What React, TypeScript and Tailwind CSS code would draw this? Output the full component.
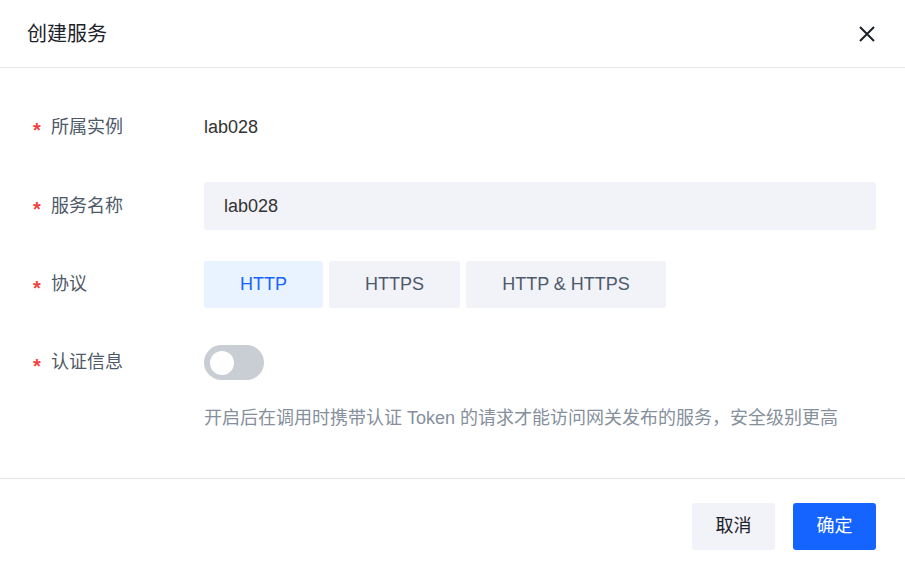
import { useState } from 'react'

const font = { fontFamily: '"Liberation Sans", "Noto Sans CJK SC", sans-serif' }

function Label({ text }: { text: string }) {
  return (
    <div className="w-[171px] shrink-0 flex items-center text-[18px] text-[#4e5969]">
      <span className="text-[#f53f3f] w-[18px] text-[20px] font-bold leading-none pt-[6px]">*</span>
      <span>{text}</span>
    </div>
  )
}

export default function App() {
  const [protocol, setProtocol] = useState('HTTP')
  const [auth, setAuth] = useState(false)
  const protocols = [
    { key: 'HTTP', w: 'w-[119px]' },
    { key: 'HTTPS', w: 'w-[131px]' },
    { key: 'HTTP & HTTPS', w: 'w-[200px]' },
  ]

  return (
    <div className="w-[905px] h-[574px] bg-white flex flex-col" style={font}>
      {/* Header */}
      <div className="h-[68px] shrink-0 flex items-center justify-between pl-[27px] pr-[30px] border-b border-[#e5e6eb]">
        <h1 className="text-[20px] text-[#1d2129]">创建服务</h1>
        <button className="w-[16px] h-[16px] text-[#1d2129]">
          <svg viewBox="0 0 16 16" width="16" height="16" fill="none" stroke="currentColor" strokeWidth="2">
            <path d="M1 1L15 15M15 1L1 15" />
          </svg>
        </button>
      </div>

      {/* Body */}
      <div className="flex-1 flex flex-col pl-[33px] pr-[29px] pt-[47px]">
        <div className="flex items-center h-[24px]">
          <Label text="所属实例" />
          <span className="text-[18px] text-[#333]">lab028</span>
        </div>

        <div className="flex items-center mt-[43px] h-[48px]">
          <Label text="服务名称" />
          <input
            defaultValue="lab028"
            className="flex-1 h-[48px] rounded-[3px] bg-[#f2f3f8] px-[20px] text-[18px] text-[#333] outline-none"
          />
        </div>

        <div className="flex items-center mt-[31px] h-[47px]">
          <Label text="协议" />
          <div className="flex gap-[6px]">
            {protocols.map(p => (
              <button
                key={p.key}
                onClick={() => setProtocol(p.key)}
                className={`${p.w} h-[47px] rounded-[3px] text-[18px] ${
                  protocol === p.key ? 'bg-[#e8f3ff] text-[#1664ff]' : 'bg-[#f2f3f8] text-[#4e5969]'
                }`}
              >
                {p.key}
              </button>
            ))}
          </div>
        </div>

        <div className="flex items-center mt-[37px] h-[35px]">
          <Label text="认证信息" />
          <button
            onClick={() => setAuth(!auth)}
            className={`relative w-[60px] h-[35px] rounded-full ${auth ? 'bg-[#1664ff]' : 'bg-[#c9cdd4]'}`}
          >
            <span
              className={`absolute top-[5.5px] w-[24px] h-[24px] rounded-full bg-white ${auth ? 'left-[30px]' : 'left-[6px]'}`}
            />
          </button>
        </div>

        <p className="ml-[171px] mt-[26px] text-[18px] leading-[24px] text-[#86909c]">
          开启后在调用时携带认证 Token 的请求才能访问网关发布的服务，安全级别更高
        </p>
      </div>

      {/* Footer */}
      <div className="h-[96px] shrink-0 border-t border-[#e5e6eb] flex items-start justify-end gap-[18px] pr-[29px] pt-[24px]">
        <button className="w-[83px] h-[47px] rounded-[3px] bg-[#f2f3f8] text-[18px] text-[#1d2129]">取消</button>
        <button className="w-[83px] h-[47px] rounded-[3px] bg-[#1664ff] text-[18px] text-white">确定</button>
      </div>
    </div>
  )
}
